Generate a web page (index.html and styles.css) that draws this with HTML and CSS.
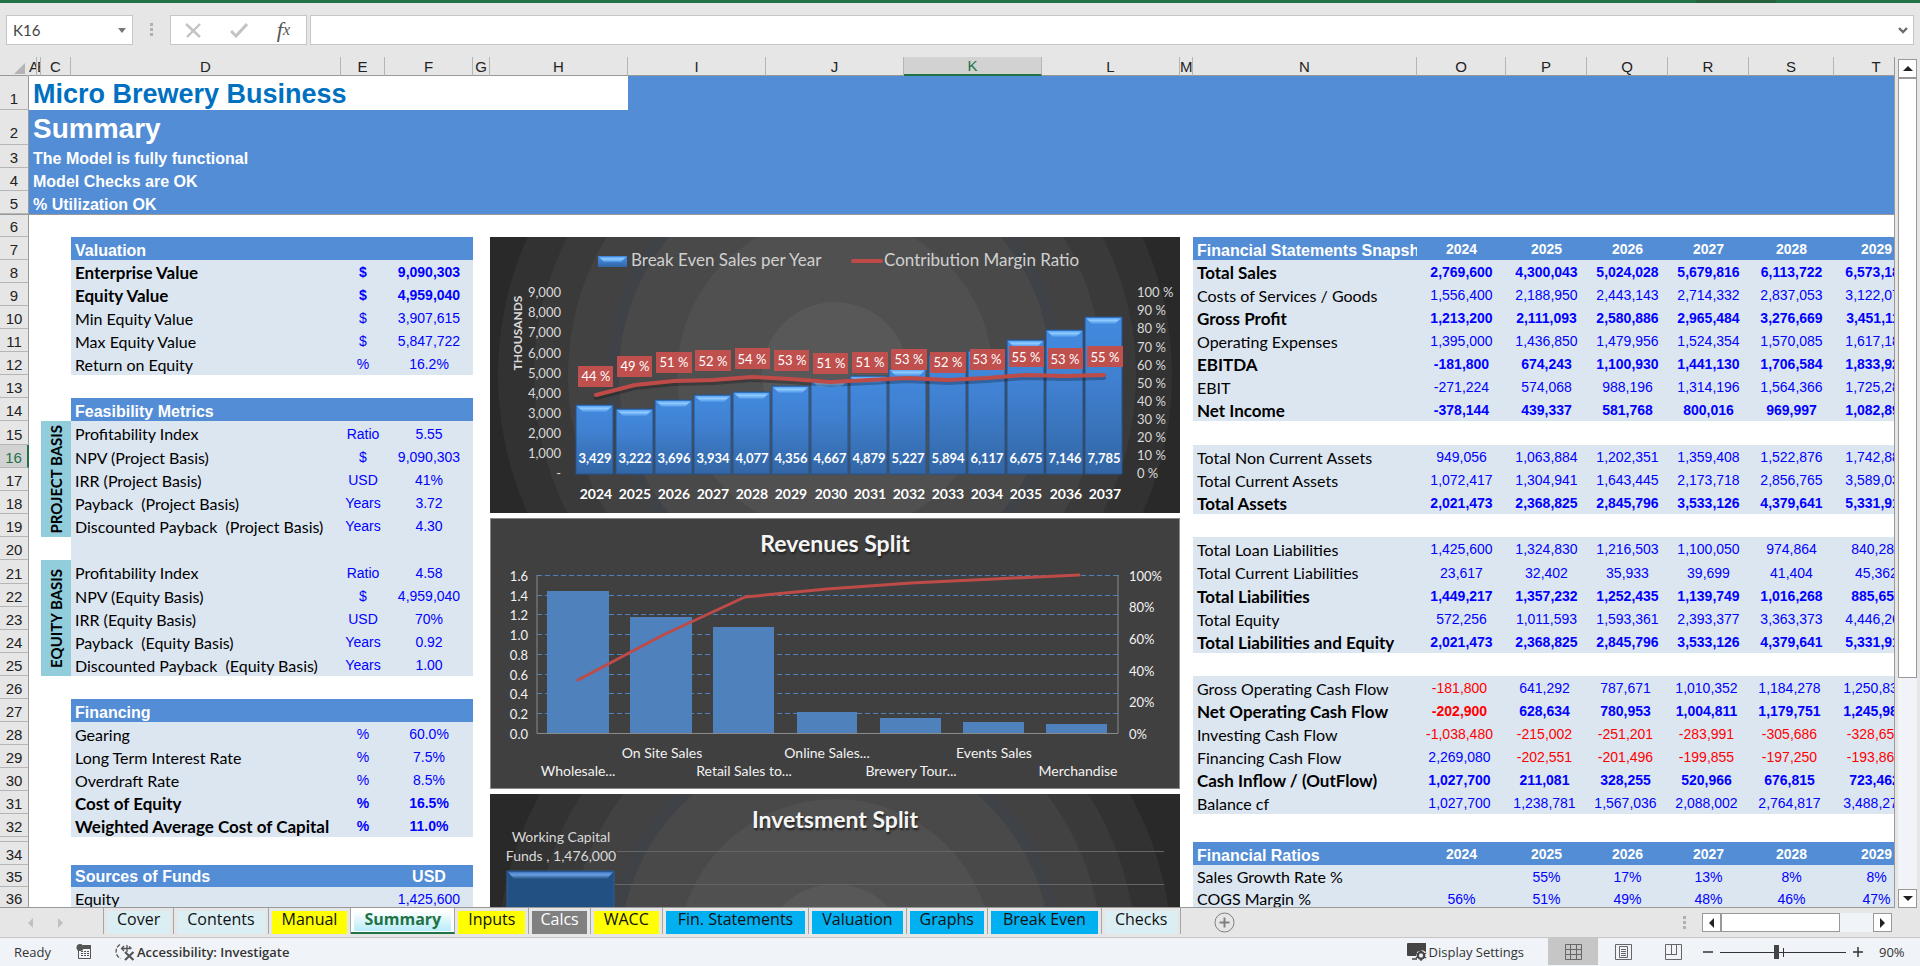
FILE: index.html
```html
<!DOCTYPE html>
<html lang="en">
<head>
<meta charset="utf-8">
<title>Micro Brewery Business - Summary</title>
<link rel="stylesheet" href="styles.css">
</head>
<body>
<div class="ribbon-edge"><span class="ribbon-shade"></span></div>

<div class="formula-bar">
  <button class="name-box" aria-label="Name box"><span>K16</span><svg width="8" height="5" viewBox="0 0 8 5"><path d="M0 0h8L4 5z" fill="#777"/></svg></button>
  <svg class="grip" width="3" height="14" viewBox="0 0 3 14"><path d="M0 0h3v3H0zM0 5h3v3H0zM0 10h3v3H0z" fill="#b0b0b0"/></svg>
  <div class="fx-box">
    <button aria-label="Cancel"><svg width="17" height="15" viewBox="0 0 17 15"><path d="M1 1l14 13M15 1L2 14" stroke="#c3c3c3" stroke-width="2.4" fill="none"/></svg></button>
    <button aria-label="Enter"><svg width="18" height="15" viewBox="0 0 18 15"><path d="M1 8l5 5L17 1" stroke="#c3c3c3" stroke-width="3" fill="none"/></svg></button>
    <button class="fx" aria-label="Insert function">f<sub>x</sub></button>
  </div>
  <div class="formula">
    <input type="text" aria-label="Formula">
    <svg width="10" height="7" viewBox="0 0 10 7"><path d="M1 1l4 4 4-4" stroke="#6a6a6a" stroke-width="2.4" fill="none"/></svg>
  </div>
</div>

<main class="work">
<div class="sheet">
<table class="grid">
<colgroup><col class="w-head"><col class="w-a"><col class="w-b"><col class="w-c"><col class="w-d"><col class="w-e"><col class="w-f"><col class="w-g"><col class="w-h"><col class="w-h"><col class="w-h"><col class="w-h"><col class="w-h"><col class="w-m"><col class="w-n"><col class="w-o"><col class="w-p"><col class="w-p"><col class="w-p"><col class="w-s"><col class="w-s"></colgroup>
<thead>
<tr><th class="corner"><svg width="11" height="11" viewBox="0 0 11 11"><path d="M11 0v11H0z" fill="#b4b4b4"/></svg></th><th>A</th><th>B</th><th>C</th><th>D</th><th>E</th><th>F</th><th>G</th><th>H</th><th>I</th><th>J</th><th class="sel">K</th><th>L</th><th>M</th><th>N</th><th>O</th><th>P</th><th>Q</th><th>R</th><th>S</th><th>T</th></tr>
</thead>
<tbody>
<tr class="r1"><th>1</th><td class="title" colspan="8">Micro Brewery Business</td><td class="band" colspan="12"></td></tr>
<tr class="r2"><th>2</th><td class="band heading" colspan="20">Summary</td></tr>
<tr><th>3</th><td class="band" colspan="20">The Model is fully functional</td></tr>
<tr><th>4</th><td class="band" colspan="20">Model Checks are OK</td></tr>
<tr><th>5</th><td class="band" colspan="20">% Utilization OK</td></tr>
<tr class="frozen"><th>6</th><td colspan="20"></td></tr>
<tr><th>7</th><td colspan="3"></td><td class="head" colspan="3">Valuation</td><td></td>
<td class="charts" colspan="5" rowspan="30">
<div class="chart-stack">
<svg class="chart" viewBox="0 0 690 276" role="img" aria-label="Break even sales per year">
<defs>
<linearGradient id="bar" x1="0" y1="0" x2="0" y2="1"><stop offset="0" stop-color="#428adf"/><stop offset=".4" stop-color="#4080d0"/><stop offset="1" stop-color="#3266a5"/></linearGradient>
<linearGradient id="shine" x1="0" y1="0" x2="0" y2="1"><stop offset="0" stop-color="#5aa5f5"/><stop offset=".4" stop-color="#8fcbff"/><stop offset="1" stop-color="#4990e4"/></linearGradient>
<linearGradient id="shine2" x1="0" y1="0" x2="0" y2="1"><stop offset="0" stop-color="#3f78c0"/><stop offset=".4" stop-color="#6c9fe0"/><stop offset="1" stop-color="#225083"/></linearGradient>
<path id="bevel" d="M1 1h35l-6 6H7z" fill="url(#shine)"/>
<g id="rings"><circle r="337" fill="#323232"/><circle r="301" fill="#3a3a3a"/><circle r="267" fill="#424242"/><circle r="228" fill="#3f4247"/><circle r="216" fill="#494949"/><circle r="158" fill="#505050"/><circle r="73" fill="#585858"/></g>
</defs>
<rect width="690" height="276" fill="#292929"/>
<use href="#rings" x="345" y="138"/>
<rect x="108" y="19" width="29" height="11" fill="url(#bar)"/><path d="M109 20h27l-5 5h-17z" fill="url(#shine)"/>
<path d="M363 24h28" stroke="#be4b48" stroke-width="4" stroke-linecap="round"/>
<g class="legend"><text x="141" y="29">Break Even Sales per Year</text><text x="394" y="29">Contribution Margin Ratio</text></g>
<text class="axis-title" transform="translate(32 96) rotate(-90)">THOUSANDS</text>
<g class="axis end"><text x="71" y="60">9,000</text><text x="71" y="80">8,000</text><text x="71" y="100">7,000</text><text x="71" y="121">6,000</text><text x="71" y="141">5,000</text><text x="71" y="161">4,000</text><text x="71" y="181">3,000</text><text x="71" y="201">2,000</text><text x="71" y="221">1,000</text><text x="71" y="241">-</text></g>
<g class="axis"><text x="647" y="60">100 %</text><text x="647" y="78">90 %</text><text x="647" y="96">80 %</text><text x="647" y="115">70 %</text><text x="647" y="133">60 %</text><text x="647" y="151">50 %</text><text x="647" y="169">40 %</text><text x="647" y="187">30 %</text><text x="647" y="205">20 %</text><text x="647" y="223">10 %</text><text x="647" y="241">0 %</text></g>
<g fill="url(#bar)" stroke="#25548f"><rect x="86" y="168" width="37" height="69"/><rect x="126" y="172" width="37" height="65"/><rect x="165" y="163" width="37" height="74"/><rect x="204" y="158" width="37" height="79"/><rect x="243" y="155" width="37" height="82"/><rect x="282" y="149" width="37" height="88"/><rect x="321" y="143" width="37" height="94"/><rect x="360" y="139" width="37" height="98"/><rect x="399" y="132" width="37" height="105"/><rect x="439" y="118" width="37" height="119"/><rect x="478" y="114" width="37" height="123"/><rect x="517" y="103" width="37" height="134"/><rect x="556" y="93" width="37" height="144"/><rect x="595" y="80" width="37" height="157"/></g>
<use href="#bevel" x="86" y="168"/><use href="#bevel" x="126" y="172"/><use href="#bevel" x="165" y="163"/><use href="#bevel" x="204" y="158"/><use href="#bevel" x="243" y="155"/><use href="#bevel" x="282" y="149"/><use href="#bevel" x="321" y="143"/><use href="#bevel" x="360" y="139"/><use href="#bevel" x="399" y="132"/><use href="#bevel" x="439" y="118"/><use href="#bevel" x="478" y="114"/><use href="#bevel" x="517" y="103"/><use href="#bevel" x="556" y="93"/><use href="#bevel" x="595" y="80"/>
<g fill="none" stroke-linecap="round" stroke-linejoin="round"><path d="M106 161L145 151 184 147 223 146 262 143 301 145 340 148 379 146 418 144 458 146 497 144 536 141 575 142 614 141" stroke="#000" stroke-opacity=".25" stroke-width="4"/><path d="M106 158L145 148 184 144 223 143 262 140 301 142 340 145 379 143 418 141 458 143 497 141 536 138 575 139 614 138" stroke="#be4b48" stroke-width="4"/></g>
<g fill="#c0504d"><rect x="88" y="129" width="35" height="21"/><rect x="127" y="119" width="35" height="21"/><rect x="166" y="115" width="36" height="21"/><rect x="205" y="113" width="36" height="21"/><rect x="245" y="111" width="35" height="21"/><rect x="284" y="113" width="35" height="21"/><rect x="323" y="116" width="35" height="21"/><rect x="362" y="115" width="36" height="21"/><rect x="401" y="112" width="36" height="21"/><rect x="440" y="115" width="36" height="21"/><rect x="480" y="112" width="35" height="21"/><rect x="519" y="109" width="35" height="21"/><rect x="558" y="111" width="35" height="21"/><rect x="597" y="109" width="36" height="21"/></g>
<g class="tag"><text x="106" y="144">44 %</text><text x="145" y="134">49 %</text><text x="184" y="130">51 %</text><text x="223" y="129">52 %</text><text x="262" y="127">54 %</text><text x="302" y="128">53 %</text><text x="341" y="131">51 %</text><text x="380" y="130">51 %</text><text x="419" y="127">53 %</text><text x="458" y="130">52 %</text><text x="497" y="127">53 %</text><text x="536" y="125">55 %</text><text x="575" y="127">53 %</text><text x="615" y="125">55 %</text></g>
<g class="value"><text x="105" y="226">3,429</text><text x="145" y="226">3,222</text><text x="184" y="226">3,696</text><text x="223" y="226">3,934</text><text x="262" y="226">4,077</text><text x="301" y="226">4,356</text><text x="340" y="226">4,667</text><text x="379" y="226">4,879</text><text x="418" y="226">5,227</text><text x="458" y="226">5,894</text><text x="497" y="226">6,117</text><text x="536" y="226">6,675</text><text x="575" y="226">7,146</text><text x="614" y="226">7,785</text></g>
<g class="year"><text x="106" y="262">2024</text><text x="145" y="262">2025</text><text x="184" y="262">2026</text><text x="223" y="262">2027</text><text x="262" y="262">2028</text><text x="301" y="262">2029</text><text x="341" y="262">2030</text><text x="380" y="262">2031</text><text x="419" y="262">2032</text><text x="458" y="262">2033</text><text x="497" y="262">2034</text><text x="536" y="262">2035</text><text x="576" y="262">2036</text><text x="615" y="262">2037</text></g>
</svg>
<svg class="chart" viewBox="0 0 690 271" role="img" aria-label="Revenues split">
<rect x=".5" y=".5" width="689" height="270" fill="#404040" stroke="#8a8a8a"/>
<text class="chart-title" x="345" y="34">Revenues Split</text>
<path d="M47 57.500H628M47 77.500H628M47 96.500H628M47 116.500H628M47 136.500H628M47 156.500H628M47 175.500H628M47 195.500H628" stroke="#4f81bd" stroke-dasharray="5 3"/>
<path d="M47 57V215.500H628V57" fill="none" stroke="#8a8a8a"/>
<path d="M57 73h62v142H57zM140 99h62v116h-62zM223 109h61v106h-61zM307 194h60v21h-60zM390 200h61v15h-61zM473 204h61v11h-61zM556 206h61v9h-61z" fill="#4f81bd"/>
<path d="M88 162L173 117 255 79 337 71 421 65 504 61 589 57" fill="none" stroke="#be4b48" stroke-width="3" stroke-linecap="round" stroke-linejoin="round"/>
<g class="axis light end"><text x="38" y="63">1.6</text><text x="38" y="83">1.4</text><text x="38" y="102">1.2</text><text x="38" y="122">1.0</text><text x="38" y="142">0.8</text><text x="38" y="162">0.6</text><text x="38" y="181">0.4</text><text x="38" y="201">0.2</text><text x="38" y="221">0.0</text></g>
<g class="axis light"><text x="639" y="63">100%</text><text x="639" y="94">80%</text><text x="639" y="126">60%</text><text x="639" y="158">40%</text><text x="639" y="189">20%</text><text x="639" y="221">0%</text></g>
<g class="light mid"><text x="172" y="240">On Site Sales</text><text x="337" y="240">Online Sales...</text><text x="504" y="240">Events Sales</text><text x="88" y="258">Wholesale...</text><text x="254" y="258">Retail Sales to...</text><text x="421" y="258">Brewery Tour...</text><text x="588" y="258">Merchandise</text></g>
</svg>
<svg class="chart" viewBox="0 0 690 115" role="img" aria-label="Investment split">
<rect width="690" height="115" fill="#292929"/>
<use href="#rings" x="345" y="163"/>
<path d="M127 57.500H674M125 90.500H674" stroke="#666"/>
<text class="chart-title" x="345" y="34">Invetsment Split</text>
<g class="mid"><text x="71" y="48">Working Capital</text><text x="71" y="67">Funds , 1,476,000</text></g>
<rect x="17" y="77" width="107" height="40" fill="#225083" stroke="#2d5f9c"/><path d="M18 78h105l-6 7H24z" fill="url(#shine2)"/>
</svg>
</div>
</td>
<td></td><td class="head">Financial Statements Snapshot</td><td class="yr">2024</td><td class="yr">2025</td><td class="yr">2026</td><td class="yr">2027</td><td class="yr">2028</td><td class="yr">2029</td></tr>
<tr class="b"><th>8</th><td colspan="3"></td><td class="lab">Enterprise Value</td><td class="num">$</td><td class="num">9,090,303</td><td></td><td></td><td class="lab">Total Sales</td><td class="num">2,769,600</td><td class="num">4,300,043</td><td class="num">5,024,028</td><td class="num">5,679,816</td><td class="num">6,113,722</td><td class="num">6,573,184</td></tr>
<tr><th>9</th><td colspan="3"></td><td class="lab b">Equity Value</td><td class="num b">$</td><td class="num b">4,959,040</td><td></td><td></td><td class="lab">Costs of Services / Goods</td><td class="num">1,556,400</td><td class="num">2,188,950</td><td class="num">2,443,143</td><td class="num">2,714,332</td><td class="num">2,837,053</td><td class="num">3,122,073</td></tr>
<tr><th>10</th><td colspan="3"></td><td class="lab">Min Equity Value</td><td class="num">$</td><td class="num">3,907,615</td><td></td><td></td><td class="lab b">Gross Profit</td><td class="num b">1,213,200</td><td class="num b">2,111,093</td><td class="num b">2,580,886</td><td class="num b">2,965,484</td><td class="num b">3,276,669</td><td class="num b">3,451,111</td></tr>
<tr><th>11</th><td colspan="3"></td><td class="lab">Max Equity Value</td><td class="num">$</td><td class="num">5,847,722</td><td></td><td></td><td class="lab">Operating Expenses</td><td class="num">1,395,000</td><td class="num">1,436,850</td><td class="num">1,479,956</td><td class="num">1,524,354</td><td class="num">1,570,085</td><td class="num">1,617,188</td></tr>
<tr><th>12</th><td colspan="3"></td><td class="lab">Return on Equity</td><td class="num">%</td><td class="num">16.2%</td><td></td><td></td><td class="lab b">EBITDA</td><td class="num b">-181,800</td><td class="num b">674,243</td><td class="num b">1,100,930</td><td class="num b">1,441,130</td><td class="num b">1,706,584</td><td class="num b">1,833,923</td></tr>
<tr><th>13</th><td colspan="3"></td><td colspan="3"></td><td></td><td></td><td class="lab">EBIT</td><td class="num">-271,224</td><td class="num">574,068</td><td class="num">988,196</td><td class="num">1,314,196</td><td class="num">1,564,366</td><td class="num">1,725,288</td></tr>
<tr><th>14</th><td colspan="3"></td><td class="head" colspan="3">Feasibility Metrics</td><td></td><td></td><td class="lab b">Net Income</td><td class="num b">-378,144</td><td class="num b">439,337</td><td class="num b">581,768</td><td class="num b">800,016</td><td class="num b">969,997</td><td class="num b">1,082,898</td></tr>
<tr><th>15</th><td colspan="2"></td><td class="side" rowspan="5"><span>PROJECT BASIS</span></td><td class="lab">Profitability Index</td><td class="num">Ratio</td><td class="num">5.55</td><td></td><td></td><td colspan="7"></td></tr>
<tr><th class="sel">16</th><td colspan="2"></td><td class="lab">NPV (Project Basis)</td><td class="num">$</td><td class="num">9,090,303</td><td></td><td></td><td class="lab">Total Non Current Assets</td><td class="num">949,056</td><td class="num">1,063,884</td><td class="num">1,202,351</td><td class="num">1,359,408</td><td class="num">1,522,876</td><td class="num">1,742,883</td></tr>
<tr><th>17</th><td colspan="2"></td><td class="lab">IRR (Project Basis)</td><td class="num">USD</td><td class="num">41%</td><td></td><td></td><td class="lab">Total Current Assets</td><td class="num">1,072,417</td><td class="num">1,304,941</td><td class="num">1,643,445</td><td class="num">2,173,718</td><td class="num">2,856,765</td><td class="num">3,589,033</td></tr>
<tr><th>18</th><td colspan="2"></td><td class="lab">Payback&nbsp; (Project Basis)</td><td class="num">Years</td><td class="num">3.72</td><td></td><td></td><td class="lab b">Total Assets</td><td class="num b">2,021,473</td><td class="num b">2,368,825</td><td class="num b">2,845,796</td><td class="num b">3,533,126</td><td class="num b">4,379,641</td><td class="num b">5,331,916</td></tr>
<tr><th>19</th><td colspan="2"></td><td class="lab">Discounted Payback&nbsp; (Project Basis)</td><td class="num">Years</td><td class="num">4.30</td><td></td><td></td><td colspan="7"></td></tr>
<tr><th>20</th><td colspan="3"></td><td class="lab"></td><td class="num"></td><td class="num"></td><td></td><td></td><td class="lab">Total Loan Liabilities</td><td class="num">1,425,600</td><td class="num">1,324,830</td><td class="num">1,216,503</td><td class="num">1,100,050</td><td class="num">974,864</td><td class="num">840,288</td></tr>
<tr><th>21</th><td colspan="2"></td><td class="side" rowspan="5"><span>EQUITY BASIS</span></td><td class="lab">Profitability Index</td><td class="num">Ratio</td><td class="num">4.58</td><td></td><td></td><td class="lab">Total Current Liabilities</td><td class="num">23,617</td><td class="num">32,402</td><td class="num">35,933</td><td class="num">39,699</td><td class="num">41,404</td><td class="num">45,362</td></tr>
<tr><th>22</th><td colspan="2"></td><td class="lab">NPV (Equity Basis)</td><td class="num">$</td><td class="num">4,959,040</td><td></td><td></td><td class="lab b">Total Liabilities</td><td class="num b">1,449,217</td><td class="num b">1,357,232</td><td class="num b">1,252,435</td><td class="num b">1,139,749</td><td class="num b">1,016,268</td><td class="num b">885,650</td></tr>
<tr><th>23</th><td colspan="2"></td><td class="lab">IRR (Equity Basis)</td><td class="num">USD</td><td class="num">70%</td><td></td><td></td><td class="lab">Total Equity</td><td class="num">572,256</td><td class="num">1,011,593</td><td class="num">1,593,361</td><td class="num">2,393,377</td><td class="num">3,363,373</td><td class="num">4,446,266</td></tr>
<tr><th>24</th><td colspan="2"></td><td class="lab">Payback&nbsp; (Equity Basis)</td><td class="num">Years</td><td class="num">0.92</td><td></td><td></td><td class="lab b">Total Liabilities and Equity</td><td class="num b">2,021,473</td><td class="num b">2,368,825</td><td class="num b">2,845,796</td><td class="num b">3,533,126</td><td class="num b">4,379,641</td><td class="num b">5,331,916</td></tr>
<tr><th>25</th><td colspan="2"></td><td class="lab">Discounted Payback&nbsp; (Equity Basis)</td><td class="num">Years</td><td class="num">1.00</td><td></td><td></td><td colspan="7"></td></tr>
<tr class="flow"><th>26</th><td colspan="3"></td><td colspan="3"></td><td></td><td></td><td class="lab">Gross Operating Cash Flow</td><td class="num neg">-181,800</td><td class="num">641,292</td><td class="num">787,671</td><td class="num">1,010,352</td><td class="num">1,184,278</td><td class="num">1,250,833</td></tr>
<tr class="flow"><th>27</th><td colspan="3"></td><td class="head" colspan="3">Financing</td><td></td><td></td><td class="lab b">Net Operating Cash Flow</td><td class="num neg b">-202,900</td><td class="num b">628,634</td><td class="num b">780,953</td><td class="num b">1,004,811</td><td class="num b">1,179,751</td><td class="num b">1,245,988</td></tr>
<tr class="flow"><th>28</th><td colspan="3"></td><td class="lab">Gearing</td><td class="num">%</td><td class="num">60.0%</td><td></td><td></td><td class="lab">Investing Cash Flow</td><td class="num neg">-1,038,480</td><td class="num neg">-215,002</td><td class="num neg">-251,201</td><td class="num neg">-283,991</td><td class="num neg">-305,686</td><td class="num neg">-328,655</td></tr>
<tr class="flow"><th>29</th><td colspan="3"></td><td class="lab">Long Term Interest Rate</td><td class="num">%</td><td class="num">7.5%</td><td></td><td></td><td class="lab">Financing Cash Flow</td><td class="num">2,269,080</td><td class="num neg">-202,551</td><td class="num neg">-201,496</td><td class="num neg">-199,855</td><td class="num neg">-197,250</td><td class="num neg">-193,866</td></tr>
<tr class="flow"><th>30</th><td colspan="3"></td><td class="lab">Overdraft Rate</td><td class="num">%</td><td class="num">8.5%</td><td></td><td></td><td class="lab b">Cash Inflow / (OutFlow)</td><td class="num b">1,027,700</td><td class="num b">211,081</td><td class="num b">328,255</td><td class="num b">520,966</td><td class="num b">676,815</td><td class="num b">723,462</td></tr>
<tr class="flow"><th>31</th><td colspan="3"></td><td class="lab b">Cost of Equity</td><td class="num b">%</td><td class="num b">16.5%</td><td></td><td></td><td class="lab">Balance cf</td><td class="num">1,027,700</td><td class="num">1,238,781</td><td class="num">1,567,036</td><td class="num">2,088,002</td><td class="num">2,764,817</td><td class="num">3,488,279</td></tr>
<tr><th>32</th><td colspan="3"></td><td class="lab b">Weighted Average Cost of Capital</td><td class="num b">%</td><td class="num b">11.0%</td><td></td><td></td><td colspan="7"></td></tr>
<tr class="thin"><th></th><td colspan="3"></td><td colspan="3"></td><td></td><td></td><td colspan="7"></td></tr>
<tr><th>34</th><td colspan="3"></td><td colspan="3"></td><td></td><td></td><td class="head">Financial Ratios</td><td class="yr">2024</td><td class="yr">2025</td><td class="yr">2026</td><td class="yr">2027</td><td class="yr">2028</td><td class="yr">2029</td></tr>
<tr class="low"><th>35</th><td colspan="3"></td><td class="head" colspan="2">Sources of Funds</td><td class="head usd">USD</td><td></td><td></td><td class="lab">Sales Growth Rate %</td><td class="num"></td><td class="num">55%</td><td class="num">17%</td><td class="num">13%</td><td class="num">8%</td><td class="num">8%</td></tr>
<tr class="low"><th>36</th><td colspan="3"></td><td class="lab">Equity</td><td class="num"></td><td class="num">1,425,600</td><td></td><td></td><td class="lab">COGS Margin %</td><td class="num">56%</td><td class="num">51%</td><td class="num">49%</td><td class="num">48%</td><td class="num">46%</td><td class="num">47%</td></tr>
</tbody>
</table>
</div>
<div class="vscroll">
  <button aria-label="Scroll up"><svg width="10" height="5" viewBox="0 0 10 5"><path d="M5 0l5 5H0z" fill="#222"/></svg></button>
  <div class="vtrack"><div class="vthumb"></div></div>
  <button aria-label="Scroll down"><svg width="10" height="5" viewBox="0 0 10 5"><path d="M0 0h10L5 5z" fill="#222"/></svg></button>
</div>
</main>

<div class="tab-bar">
  <div class="tab-nav">
    <button aria-label="Previous sheets"><svg width="5" height="10" viewBox="0 0 5 10"><path d="M5 0v10L0 5z" fill="#c0c0c0"/></svg></button>
    <button aria-label="Next sheets"><svg width="5" height="10" viewBox="0 0 5 10"><path d="M0 0v10l5-5z" fill="#c0c0c0"/></svg></button>
  </div>
  <ul class="tabs">
    <li><button class="pale">Cover</button></li>
    <li><button class="pale">Contents</button></li>
    <li><button class="yellow">Manual</button></li>
    <li class="active"><button>Summary</button></li>
    <li><button class="yellow">Inputs</button></li>
    <li><button class="grey">Calcs</button></li>
    <li><button class="yellow">WACC</button></li>
    <li><button class="blue wide">Fin. Statements</button></li>
    <li><button class="blue">Valuation</button></li>
    <li><button class="blue">Graphs</button></li>
    <li><button class="blue wide">Break Even</button></li>
    <li><button class="pale">Checks</button></li>
  </ul>
  <button class="add" aria-label="New sheet"><svg width="21" height="21" viewBox="0 0 21 21" fill="none" stroke="#808080"><circle cx="10.500" cy="10.500" r="9.500"/><path d="M10.500 5.500v10M5.500 10.500h10" stroke-width="2"/></svg></button>
  <svg class="hgrip" width="3" height="14" viewBox="0 0 3 14"><path d="M0 0h3v3H0zM0 5h3v3H0zM0 10h3v3H0z" fill="#b0b0b0"/></svg>
  <div class="hscroll">
    <button aria-label="Scroll left"><svg width="5" height="10" viewBox="0 0 5 10"><path d="M5 0v10L0 5z" fill="#222"/></svg></button>
    <div class="htrack"><div class="hthumb"></div></div>
    <button aria-label="Scroll right"><svg width="5" height="10" viewBox="0 0 5 10"><path d="M0 0v10l5-5z" fill="#222"/></svg></button>
  </div>
</div>

<footer class="status">
  <span class="ready">Ready</span>
  <svg class="macro" width="16" height="15" viewBox="0 0 16 15"><path d="M2.500 6v8.500h12V2.500H7" fill="none" stroke="#555"/><path d="M7 1h8v4H7z" fill="#555"/><circle cx="4" cy="3.500" r="3.500" fill="#555"/><path d="M5 7.500h8M5 9.500h8M5 11.500h8" stroke="#555" stroke-dasharray="2 1"/></svg>
  <button class="access"><svg width="20" height="18" viewBox="0 0 20 18" fill="none" stroke="#555" stroke-width="1.300"><path d="M5 1.500A8 8 0 0 0 5.500 15.500" stroke-dasharray="4 1.500"/><path d="M7 5.500h9M9 3l-2.500 2.500L9 8M12 2v7M14 3.500l2.500 2" /><path d="M10 9l8.500 8M18.500 9L10 17" stroke-width="2.200"/></svg>Accessibility: Investigate</button>
  <button class="display"><svg width="20" height="18" viewBox="0 0 20 18"><path d="M1 0h18v9l-4-2-5 2-1 4H1a1 1 0 0 1-1-1V1a1 1 0 0 1 1-1z" fill="#444"/><path d="M5 16h5" stroke="#444" stroke-width="1.500"/><circle cx="14" cy="12.500" r="3.300" fill="none" stroke="#444" stroke-width="2.200"/><path d="M14 7v11M8.800 10l10.400 5M8.800 15l10.400-5" stroke="#444" stroke-width="1.300"/><circle cx="14" cy="12.500" r="2" fill="#f0f3f8"/></svg>Display Settings</button>
  <button class="view on" aria-label="Normal view"><svg width="17" height="16" viewBox="0 0 17 16" fill="none" stroke="#666"><path d="M.500.500h16v15H.500zM5.500 0v16M11.500 0v16M0 5.500h17M0 10.500h17"/></svg></button>
  <button class="view" aria-label="Page layout"><svg width="17" height="16" viewBox="0 0 17 16" fill="none" stroke="#666"><path d="M.500.500h16v15H.500zM4.500 2.500h8v11h-8zM6 5.500h5M6 7.500h5M6 9.500h5M6 11.500h5"/></svg></button>
  <button class="view" aria-label="Page break preview"><svg width="17" height="16" viewBox="0 0 17 16" fill="none" stroke="#666"><path d="M.500.500h16v15H.500zM6.500 0v10M11.500 0v10M1 10.500h11"/></svg></button>
  <div class="zoom">
    <button aria-label="Zoom out"><svg width="10" height="10" viewBox="0 0 10 10"><path d="M0 5h10" stroke="#333" stroke-width="1.500"/></svg></button>
    <svg class="slider" width="126" height="14" viewBox="0 0 126 14"><path d="M0 7.500h126M63.500 3v9" stroke="#333"/><path d="M54 0h5v14h-5z" fill="#444"/></svg>
    <button aria-label="Zoom in"><svg width="10" height="10" viewBox="0 0 10 10"><path d="M0 5h10M5 0v10" stroke="#333" stroke-width="1.500"/></svg></button>
    <span>90%</span>
  </div>
</footer>
</body>
</html>
```
FILE: styles.css
```css
* { box-sizing: border-box; }
body {
  margin: 0;
  height: 100vh;
  display: flex;
  flex-direction: column;
  overflow: hidden;
  background: #e6e6e6;
  font-family: "Open Sans", "Noto Sans", sans-serif;
  color: #222;
}
button { border: 0; padding: 0; background: none; font: inherit; color: inherit; display: flex; align-items: center; justify-content: center; }
svg { display: block; flex: none; }

.ribbon-edge { flex: none; height: 3px; background: #217346; padding-right: 144px; display: flex; justify-content: flex-end; }
.ribbon-shade { width: 80px; background: #25623e; }

/* formula bar */
.formula-bar { flex: none; display: flex; align-items: center; padding: 12px 6px; height: 54px; }
.name-box { width: 127px; height: 30px; background: #fff; border: 1px solid #c6c6c6; justify-content: space-between; padding: 0 6px; font: 15px Lato, sans-serif; color: #444; }
.grip { margin: 0 17px; }
.fx-box { width: 137px; height: 30px; background: #fff; border: 1px solid #c6c6c6; display: flex; align-items: center; justify-content: space-between; padding: 0 16px 0 14px; }
.fx { font: italic 22px "Liberation Serif", serif; color: #555; line-height: 20px; }
.fx sub { font-size: 16px; }
.formula { flex: 1; height: 30px; margin-left: 3px; background: #fff; border: 1px solid #c6c6c6; display: flex; align-items: center; padding-right: 5px; }
.formula input { flex: 1; height: 100%; border: 0; outline: 0; background: none; font: 15px Lato, sans-serif; }

/* worksheet */
.work { flex: 1; min-height: 0; display: flex; }
.sheet { flex: 1; min-width: 0; overflow: hidden; background: linear-gradient(#e6e6e6 18px, #fff 18px); border-right: 1px solid #999; border-bottom: 1px solid #999; }
.grid { table-layout: fixed; border-collapse: separate; border-spacing: 0; width: 1919px; font: 14px/18px "Liberation Sans", Arial, sans-serif; }
.w-head { width: 29px; } .w-a { width: 8px; } .w-b { width: 4px; } .w-c { width: 30px; }
.w-d { width: 270px; } .w-e { width: 44px; } .w-f { width: 88px; } .w-g { width: 17px; }
.w-h { width: 138px; } .w-m { width: 13px; } .w-n { width: 224px; } .w-o { width: 89px; }
.w-p { width: 81px; } .w-s { width: 85px; }
.grid th, .grid td { padding: 0; overflow: hidden; white-space: nowrap; }
.grid td { height: 23px; background: #fff; }
.grid th { background: #e6e6e6; font-weight: normal; font-size: 15px; color: #222; text-align: center; }
.grid thead th { height: 19px; line-height: 17px; border-bottom: 1px solid #999; border-right: 1px solid #b5b5b5; }
.grid thead .corner { padding: 4px 3px 0 14px; border-right-color: #e6e6e6; }
.grid tbody th { height: 23px; padding-top: 4px; border-right: 1px solid #999; border-bottom: 1px solid #b5b5b5; }
.grid thead .sel { background: #d2d2d2; color: #217346; border-bottom: 2px solid #217346; }
.grid tbody .sel { background: #d2d2d2; color: #217346; border-right: 2px solid #217346; }
.grid tbody .r1 th, .grid tbody .r2 th { padding-top: 12px; }
.grid .r1 td { height: 34px; }
.grid .r2 td { height: 35px; }
.grid .title { padding: 2px 0 0 4px; font-size: 27px; line-height: 32px; font-weight: bold; color: #0070c0; }
.grid .band { padding: 4px 0 0 4px; background: #538dd5; color: #fff; font-size: 16px; font-weight: bold; }
.grid .heading { padding-top: 2px; font-size: 28px; line-height: 32px; }
.grid .frozen th { border-top: 1px solid #999; padding-top: 3px; }
.grid .frozen td { border-top: 1px solid #999; }
.grid .head { background: #538dd5; color: #fff; font-size: 16px; font-weight: bold; padding: 4px 0 0 4px; }
.grid .head.usd { text-align: center; padding-left: 0; }
.grid .yr { background: #538dd5; color: #fff; font-weight: bold; text-align: center; padding-top: 1px; }
.grid .lab { background: #dce6f1; color: #000; font-family: Lato, sans-serif; font-size: 16px; padding: 2px 0 0 4px; }
.grid .num { background: #dce6f1; color: #00f; text-align: center; padding-top: 1px; }
.grid .flow .num:nth-last-child(-n+6) { padding-right: 4px; }
.grid .num.neg { color: #f00; }
.b .lab, .b .num, .grid .b { font-weight: bold; }
.grid .b .lab, .grid .lab.b { font-size: 17px; }
.grid .side { background: #92cddc; color: #000; line-height: 0; }
.side span { display: block; margin: 0 auto; width: 18px; writing-mode: vertical-rl; transform: rotate(180deg); font: bold 15px/18px Lato, sans-serif; }
.grid .thin th, .grid .thin td { height: 5px; padding: 0; line-height: 0; }
.grid .low th, .grid .low td { height: 22px; padding-top: 2px; }
.grid .charts { vertical-align: top; }
.chart-stack { display: flex; flex-direction: column; gap: 5px; }
.chart { width: 100%; height: auto; }

/* charts */
.chart text { font-family: Lato, sans-serif; font-size: 14px; fill: #d9d9d9; }
.chart .legend text { font-size: 17px; fill: #d0d0d0; }
.chart .axis-title { text-anchor: middle; font-size: 12px; font-weight: bold; }
.end text { text-anchor: end; }
.mid text, .tag text, .value text, .year text { text-anchor: middle; }
.chart .axis text { font-size: 13px; }
.chart .light text { fill: #f2f2f2; }
.chart .tag text { font-size: 13px; fill: #fff; }
.chart .value text { font-size: 13px; font-weight: bold; fill: #fff; }
.chart .year text { font-weight: bold; fill: #fff; }
.chart .chart-title { text-anchor: middle; font-size: 23px; font-weight: bold; fill: #f5f5f5; text-shadow: 1px 2px 2px #222; }

/* scroll bars */
.vscroll { flex: none; width: 25px; padding: 2px 3px 0; display: flex; flex-direction: column; }
.vscroll button { flex: none; width: 19px; height: 19px; background: #fff; border: 1px solid #999; }
.vtrack { flex: 1; background: #f0f3f8; }
.vthumb { width: 19px; height: 74%; background: #fff; border: 1px solid #999; }

/* sheet tabs */
.tab-bar { flex: none; height: 29px; display: flex; align-items: flex-start; background: #e6e6e6; }
.tab-nav { flex: none; width: 103px; height: 29px; padding: 0 40px 0 28px; display: flex; align-items: center; justify-content: space-between; }
.tabs { display: flex; margin: 0; padding: 0; list-style: none; font-size: 16px; line-height: 17px; color: #111; border-left: 1px solid #a5a5a5; }
.tabs li { height: 26px; padding: 3px 3px 0; border-right: 1px solid #a5a5a5; }
.tabs button { height: 23px; padding: 0 10px; align-items: flex-start; }
.tabs .grey { padding: 0 8px; }
.tabs .wide { padding: 0 12px; }
.pale { background: #daeef3; }
.yellow { background: #ff0; }
.grey { background: #808080; color: #fff; }
.blue { background: #00b0f0; }
.tabs .active { background: #fff; border-bottom: 2px solid #217346; }
.active button { height: 20px; font-weight: bold; color: #217346; background: linear-gradient(#fff, #b7ecf8); }
.add { flex: none; margin: 4px auto 0 33px; }
.hgrip { margin: 8px 16px 0 0; }
.hscroll { flex: none; width: 190px; height: 19px; margin: 5px 28px 0 0; display: flex; }
.hscroll button { flex: none; width: 19px; background: #fff; border: 1px solid #999; }
.htrack { flex: 1; background: #f0f3f8; }
.hthumb { width: 78%; height: 19px; background: #fff; border: 1px solid #999; }

/* status bar */
.status { flex: none; height: 29px; padding-bottom: 1px; border-top: 1px solid #c6c6c6; background: #f0f3f8; display: flex; align-items: center; font-size: 13px; color: #333; }
.ready { margin-left: 14px; }
.macro { margin: 0 23px 0 25px; }
.access { font-weight: 600; gap: 2px; margin-right: auto; }
.display { gap: 2px; margin-right: 24px; }
.view { width: 50px; height: 27px; }
.on { background: #c6c6c6; }
.zoom { width: 222px; padding-left: 5px; display: flex; align-items: center; }
.slider { margin: 0 7px; }
.zoom span { margin-left: 16px; }
```
